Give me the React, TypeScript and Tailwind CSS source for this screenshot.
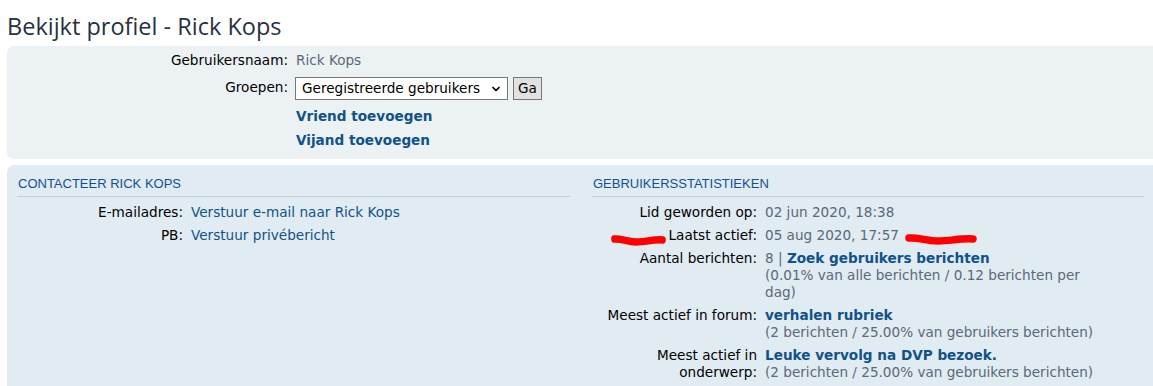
import { ChevronDown } from 'lucide-react';

const body = "font-['DejaVu_Sans',Verdana,sans-serif] text-[13.6px] leading-[17px]";

function Strike({ className }: { className: string }) {
  return (
    <svg className={`pointer-events-none absolute ${className}`} viewBox="0 0 70 12" preserveAspectRatio="none">
      <path
        d="M4 5 C 12 4, 20 8, 32 8 C 44 8, 55 5, 66 6"
        stroke="#ff0000"
        strokeWidth="7.5"
        strokeLinecap="round"
        fill="none"
      />
    </svg>
  );
}

function Row({
  label,
  labelWidth,
  children,
}: {
  label: React.ReactNode;
  labelWidth: string;
  children: React.ReactNode;
}) {
  return (
    <div className="flex">
      <div className={`${labelWidth} shrink-0 text-right text-black`}>{label}</div>
      <div className="pl-2 text-[#5b6878]">{children}</div>
    </div>
  );
}

export default function App() {
  return (
    <div className={`min-h-[386px] bg-white pl-[7px] ${body} overflow-hidden`}>
      <h2 className="pt-[11px] pb-[5px] font-['Open_Sans',sans-serif] text-[23.5px] leading-[30px] text-[#28313f]">
        Bekijkt profiel - Rick Kops
      </h2>

      <div className="h-[113px] w-[1160px] rounded-[7px] bg-[#ecf1f3] pt-[6px]">
        <div className="flex flex-col">
          <Row label="Gebruikersnaam:" labelWidth="w-[281px]">
            Rick Kops
          </Row>
          <div className="mt-[8px] flex items-start">
            <div className="w-[281px] shrink-0 pt-[2px] text-right text-black">Groepen:</div>
            <div className="flex items-center gap-[5px] pl-[7px]">
              <div className="flex h-[23px] w-[213px] items-center justify-between border border-[#767676] bg-white pl-[6px] pr-[5px] text-black">
                <span>Geregistreerde gebruikers</span>
                <ChevronDown className="h-[12px] w-[12px]" strokeWidth={3.5} />
              </div>
              <div className="flex h-[23px] w-[29px] items-center justify-center border border-[#767676] bg-[#e1e1e1] text-black">
                Ga
              </div>
            </div>
          </div>
          <div className="mt-[8px] flex flex-col gap-[7px] pl-[289px] font-bold text-[#105289]">
            <span>Vriend toevoegen</span>
            <span>Vijand toevoegen</span>
          </div>
        </div>
      </div>

      <div className="mt-[6px] h-[240px] w-[1160px] rounded-[7px] bg-[#e1ebf2] pl-[10px] pt-[11px]">
        <div className="flex gap-[22px]">
          <div className="w-[553px]">
            <h3 className="border-b border-[#c8cdd3] pb-[4px] pl-[1px] font-['Liberation_Sans',Arial,sans-serif] text-[13px] leading-[16px] text-[#115098]">
              CONTACTEER RICK KOPS
            </h3>
            <div className="mt-[7px] flex flex-col gap-[6px]">
              <Row label="E-mailadres:" labelWidth="w-[166px]">
                <span className="text-[#105289]">Verstuur e-mail naar Rick Kops</span>
              </Row>
              <Row label="PB:" labelWidth="w-[166px]">
                <span className="text-[#105289]">Verstuur privébericht</span>
              </Row>
            </div>
          </div>

          <div className="relative w-[552px]">
            <h3 className="border-b border-[#c8cdd3] pb-[4px] pl-[1px] font-['Liberation_Sans',Arial,sans-serif] text-[13px] leading-[16px] text-[#115098]">
              GEBRUIKERSSTATISTIEKEN
            </h3>
            <div className="mt-[7px] flex flex-col gap-[6px]">
              <Row label="Lid geworden op:" labelWidth="w-[165px]">
                02 jun 2020, 18:38
              </Row>
              <Row label="Laatst actief:" labelWidth="w-[165px]">
                05 aug 2020, 17:57
              </Row>
              <Row label="Aantal berichten:" labelWidth="w-[165px]">
                <div className="w-[345px]">
                  8 | <span className="font-bold text-[#105289]">Zoek gebruikers berichten</span>
                  <br />
                  (0.01% van alle berichten / 0.12 berichten per dag)
                </div>
              </Row>
              <Row label="Meest actief in forum:" labelWidth="w-[165px]">
                <span className="font-bold text-[#105289]">verhalen rubriek</span>
                <br />
                (2 berichten / 25.00% van gebruikers berichten)
              </Row>
              <Row label={<>Meest actief in<br />onderwerp:</>} labelWidth="w-[165px]">
                <span className="font-bold text-[#105289]">Leuke vervolg na DVP bezoek.</span>
                <br />
                (2 berichten / 25.00% van gebruikers berichten)
              </Row>
            </div>
            <Strike className="left-[19px] top-[58px] h-[12px] w-[55px]" />
            <Strike className="left-[313px] top-[57px] h-[12px] w-[72px]" />
          </div>
        </div>
      </div>
    </div>
  );
}
